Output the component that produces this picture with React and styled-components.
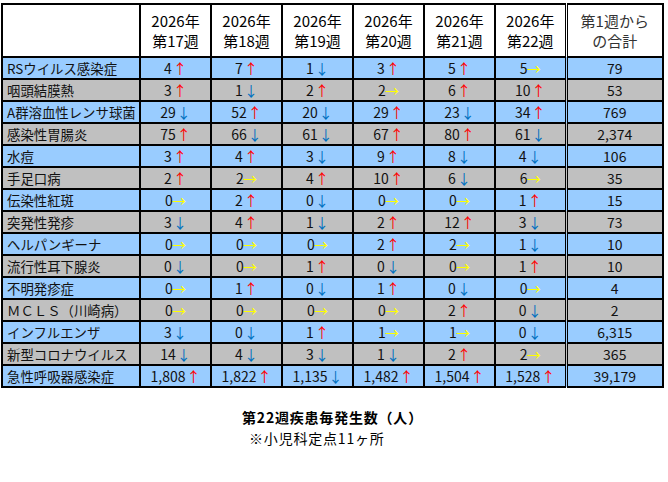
import React from 'react';
import styled, { createGlobalStyle } from 'styled-components';

const GlobalStyle = createGlobalStyle`
  body {
    margin: 0;
    background: #fff;
    font-family: "Noto Sans CJK JP", "Liberation Sans", sans-serif;
    color: #000;
  }
`;

const weeks = ["第17週", "第18週", "第19週", "第20週", "第21週", "第22週"];

const rows = [
    ["RSウイルス感染症", ["4↑", "7↑", "1↓", "3↑", "5↑", "5→"], "79"],
    ["咽頭結膜熱", ["3↑", "1↓", "2↑", "2→", "6↑", "10↑"], "53"],
    ["A群溶血性レンサ球菌", ["29↓", "52↑", "20↓", "29↑", "23↓", "34↑"], "769"],
    ["感染性胃腸炎", ["75↑", "66↓", "61↓", "67↑", "80↑", "61↓"], "2,374"],
    ["水痘", ["3↑", "4↑", "3↓", "9↑", "8↓", "4↓"], "106"],
    ["手足口病", ["2↑", "2→", "4↑", "10↑", "6↓", "6→"], "35"],
    ["伝染性紅斑", ["0→", "2↑", "0↓", "0→", "0→", "1↑"], "15"],
    ["突発性発疹", ["3↓", "4↑", "1↓", "2↑", "12↑", "3↓"], "73"],
    ["ヘルパンギーナ", ["0→", "0→", "0→", "2↑", "2→", "1↓"], "10"],
    ["流行性耳下腺炎", ["0↓", "0→", "1↑", "0↓", "0→", "1↑"], "10"],
    ["不明発疹症", ["0→", "1↑", "0↓", "1↑", "0↓", "0→"], "4"],
    ["ＭＣＬＳ（川崎病）", ["0→", "0→", "0→", "0→", "2↑", "0↓"], "2"],
    ["インフルエンザ", ["3↓", "0↓", "1↑", "1→", "1→", "0↓"], "6,315"],
    ["新型コロナウイルス", ["14↓", "4↓", "3↓", "1↓", "2↑", "2→"], "365"],
    ["急性呼吸器感染症", ["1,808↑", "1,822↑", "1,135↓", "1,482↑", "1,504↑", "1,528↑"], "39,179"],
];

const arrowColours = {
    "↑": "#ff0000",
    "↓": "#0070c0",
    "→": "#ffff00",
};

const Page = styled.div`
  padding: 3px 0 0 1px;
  width: 663px;
`;

const Table = styled.table`
  border-collapse: collapse;
  table-layout: fixed;
  width: 663px;
  font-size: 14px;
`;

const HeadCell = styled.th`
  border: 2px solid #000;
  border-left: ${({total}) => (total ? "3px double #000" : "2px solid #000")};
  background: #fff;
  font-weight: normal;
  font-size: 15px;
  line-height: 20px;
  height: 51px;
  padding: 0;
  text-align: center;
  color: ${({total}) => (total ? "#333" : "#000")};
`;

const Row = styled.tr`
  background: ${({shade}) => (shade ? "#c0c0c0" : "#99ccff")};
`;

const NameCell = styled.td`
  border: 2px solid #000;
  height: 20px;
  line-height: 20px;
  padding: 0 0 0 4px;
  font-size: 13.4px;
  white-space: nowrap;
  overflow: hidden;
  color: #111;
`;

const ValueCell = styled.td`
  border: 2px solid #000;
  border-left: ${({total}) => (total ? "3px double #000" : "2px solid #000")};
  height: 20px;
  line-height: 20px;
  padding: 0;
  text-align: center;
  white-space: nowrap;
  color: #111;
`;

const Arrow = styled.span`
  color: ${({dir}) => arrowColours[dir]};
  margin-left: ${({dir}) => (dir === "→" ? "-1px" : "1px")};
`;

const Notes = styled.div`
  display: flex;
  justify-content: center;
  margin-top: 19px;
  font-size: 14px;
  letter-spacing: 0.8px;
`;

const NotesInner = styled.div`
  display: flex;
  flex-direction: column;
`;

const Title = styled.div`
  font-weight: bold;
  line-height: 20px;
`;

const Sub = styled.div`
  padding-left: 7px;
  line-height: 22px;
`;

const Value = ({v}) => {
    const dir = v.slice(-1);
    return <>{v.slice(0, -1)}<Arrow dir={dir}>{dir}</Arrow></>;
};

export default function App() {
    return (
        <Page>
            <GlobalStyle />
            <Table>
                <colgroup>
                    <col style={{width: 138}} />
                    {weeks.map(w => <col key={w} style={{width: 71}} />)}
                    <col />
                </colgroup>
                <thead>
                    <tr>
                        <HeadCell />
                        {weeks.map(w => <HeadCell key={w}>2026年<br />{w}</HeadCell>)}
                        <HeadCell total>第1週から<br />の合計</HeadCell>
                    </tr>
                </thead>
                <tbody>
                    {rows.map(([name, vals, total], i) => (
                        <Row key={name} shade={i % 2 === 1}>
                            <NameCell>{name}</NameCell>
                            {vals.map((v, j) => <ValueCell key={j}><Value v={v} /></ValueCell>)}
                            <ValueCell total>{total}</ValueCell>
                        </Row>
                    ))}
                </tbody>
            </Table>
            <Notes>
                <NotesInner>
                    <Title>第22週疾患毎発生数（人）</Title>
                    <Sub>※小児科定点11ヶ所</Sub>
                </NotesInner>
            </Notes>
        </Page>
    );
}
